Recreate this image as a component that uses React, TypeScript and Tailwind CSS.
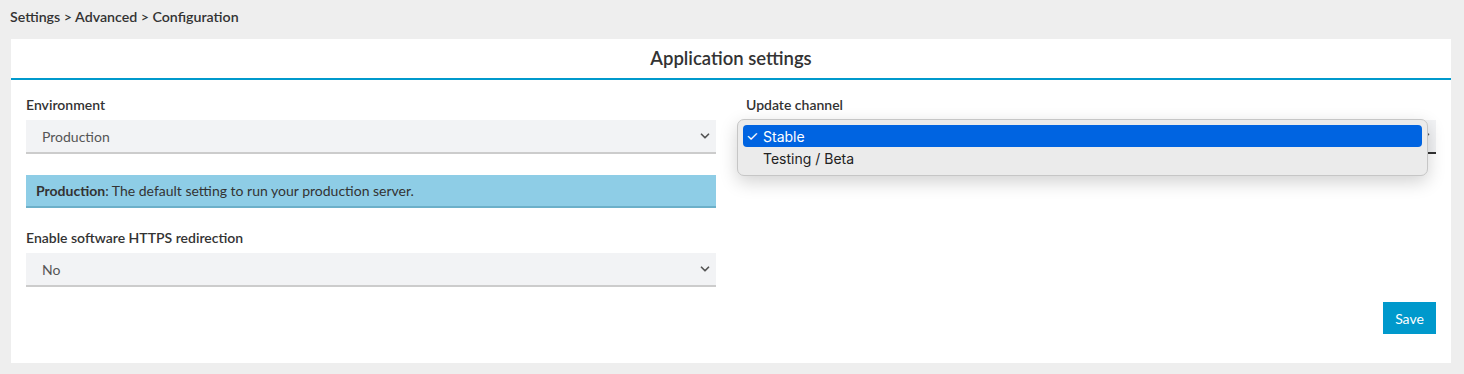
import { ChevronDown } from 'lucide-react';

function SelectBox({ value, focused }: { value: string; focused?: boolean }) {
  return (
    <div
      className={
        'mt-[5px] h-[34px] flex items-center justify-between bg-[#f2f3f5] pl-4 pr-[4px] border-b-2 ' +
        (focused ? 'border-[#333333]' : 'border-[#cccccc]')
      }
    >
      <span className="text-[14px] text-[#555555]">{value}</span>
      <ChevronDown size={14} strokeWidth={3} className="text-[#555555]" />
    </div>
  );
}

function Field({ label, children }: { label: string; children: React.ReactNode }) {
  return (
    <div>
      <div className="text-[14px] leading-5 font-semibold text-[#333333]">{label}</div>
      {children}
    </div>
  );
}

export default function App() {
  return (
    <div className="min-h-[374px] bg-[#eeeeee] font-['Lato','Noto_Sans',sans-serif] text-[#333333]">
      <div className="h-[39px] pl-[10px] pt-[7px] text-[14.2px] leading-5 font-semibold text-[#333333]">
        Settings &gt; Advanced &gt; Configuration
      </div>

      <div className="ml-[11px] w-[1440px] bg-white pb-[29px]">
        <div className="h-[41px] flex items-center justify-center border-b-2 border-[#0099cc] text-[18.5px] font-semibold text-[#333333]">
          Application settings
        </div>

        <div className="grid grid-cols-2 pt-[15px]">
          <div className="px-[15px]">
            <Field label="Environment">
              <SelectBox value="Production" />
            </Field>
            <div className="mt-[21px] h-[33px] flex items-center px-[10px] bg-[#8ecde6] border-b-2 border-[#6cb0c9] text-[14px] text-[#333333]">
              <span className="font-bold">Production</span>: The default setting to run your production server.
            </div>
            <div className="mt-[20px]">
              <Field label="Enable software HTTPS redirection">
                <SelectBox value="No" />
              </Field>
            </div>
          </div>

          <div className="px-[15px]">
            <Field label="Update channel">
              <div className="relative">
                <SelectBox value="Stable" focused />
                <div className="absolute left-[-9px] top-[-1px] w-[691px] h-[57px] rounded-[7px] border border-[#c6c6c6] bg-[#ebebeb] p-[5px] shadow-[0_6px_18px_rgba(0,0,0,0.18)] font-['Inter','Liberation_Sans',sans-serif] text-[14px]">
                  <div className="h-[22px] flex items-center rounded-[4px] bg-[#0064e1] text-white pl-[3px]">
                    <span className="w-[17px] text-[14px] leading-none">✓</span>
                    <span>Stable</span>
                  </div>
                  <div className="h-[23px] flex items-center pl-[20px] text-[#222222]">Testing / Beta</div>
                </div>
              </div>
            </Field>
          </div>
        </div>

        <div className="flex justify-end px-[15px] mt-[15px]">
          <button className="h-[32px] w-[53px] bg-[#0099cc] text-white text-[14px]">Save</button>
        </div>
      </div>
    </div>
  );
}
